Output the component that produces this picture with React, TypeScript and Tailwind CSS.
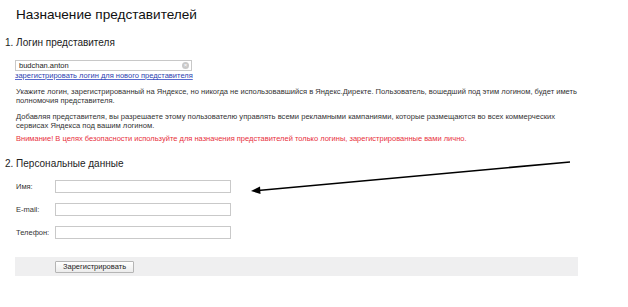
import React from "react";

export default function App() {
  const font = { fontFamily: '"Liberation Sans", Arial, sans-serif' };
  return (
    <div className="relative w-[628px] h-[307px] bg-white text-[#222] overflow-hidden" style={font}>
      <div className="pt-[6px]">
        <h1 className="pl-[16px] text-[13.6px] leading-[18px] text-[#111]">Назначение представителей</h1>
        <h2 className="pl-[5px] mt-[13px] text-[10px] leading-[12px] text-[#222]">1. Логин представителя</h2>
        <div className="ml-[15px] mt-[11px] w-[177px] h-[11px] border border-[#c8c8c8] flex items-center justify-between pl-[3px] pr-[2px]">
          <span className="text-[7.5px] leading-[9px] text-[#222]">budchan.anton</span>
          <span className="w-[7px] h-[7px] rounded-full bg-[#c9c9c9] text-white text-[6px] leading-[7px] flex items-center justify-center">×</span>
        </div>
        <a className="block ml-[15px] text-[7.5px] leading-[9px] text-[#2d3fb0] underline decoration-[#5a6bd0]">зарегистрировать логин для нового представителя</a>
        <p className="ml-[16px] mt-[7px] w-[590px] text-[7.55px] leading-[9px] text-[#333]">
          Укажите логин, зарегистрированный на Яндексе, но никогда не использовавшийся в Яндекс.Директе. Пользователь, вошедший под этим логином, будет иметь
          <br />
          полномочия представителя.
        </p>
        <p className="ml-[16px] mt-[7px] w-[590px] text-[7.6px] leading-[9px] text-[#333]">
          Добавляя представителя, вы разрешаете этому пользователю управлять всеми рекламными кампаниями, которые размещаются во всех коммерческих
          <br />
          сервисах Яндекса под вашим логином.
        </p>
        <p className="ml-[16px] mt-[4px] text-[7.5px] leading-[9px] text-[#e8303c]">
          Внимание! В целях безопасности используйте для назначения представителей только логины, зарегистрированные вами лично.
        </p>
        <h2 className="pl-[5px] mt-[15px] text-[10px] leading-[12px] text-[#222]">2. Персональные данные</h2>
        <div className="mt-[10px] flex flex-col gap-[10px]">
          {["Имя:", "E-mail:", "Телефон:"].map((l) => (
            <div key={l} className="flex items-center h-[13px]">
              <span className="w-[55px] pl-[16px] text-[7.5px] leading-[9px] text-[#333]">{l}</span>
              <div className="w-[176px] h-[13px] border border-[#c9c9c9] bg-white" />
            </div>
          ))}
        </div>
        <div className="ml-[15px] mt-[18px] w-[563px] h-[19px] bg-[#efeff0] flex items-center pl-[40px]">
          <button className="w-[79px] h-[12px] border border-[#b5b5b5] rounded-[1px] bg-gradient-to-b from-white to-[#ececec] text-[7.5px] leading-[10px] text-[#222]">
            Зарегистрировать
          </button>
        </div>
      </div>
      <svg className="absolute left-0 top-0" width="628" height="307" viewBox="0 0 628 307">
        <line x1="570" y1="162" x2="258" y2="190.5" stroke="#000" strokeWidth="1.6" />
        <polygon points="251,191 260,186.5 260.5,194" fill="#000" />
      </svg>
    </div>
  );
}
